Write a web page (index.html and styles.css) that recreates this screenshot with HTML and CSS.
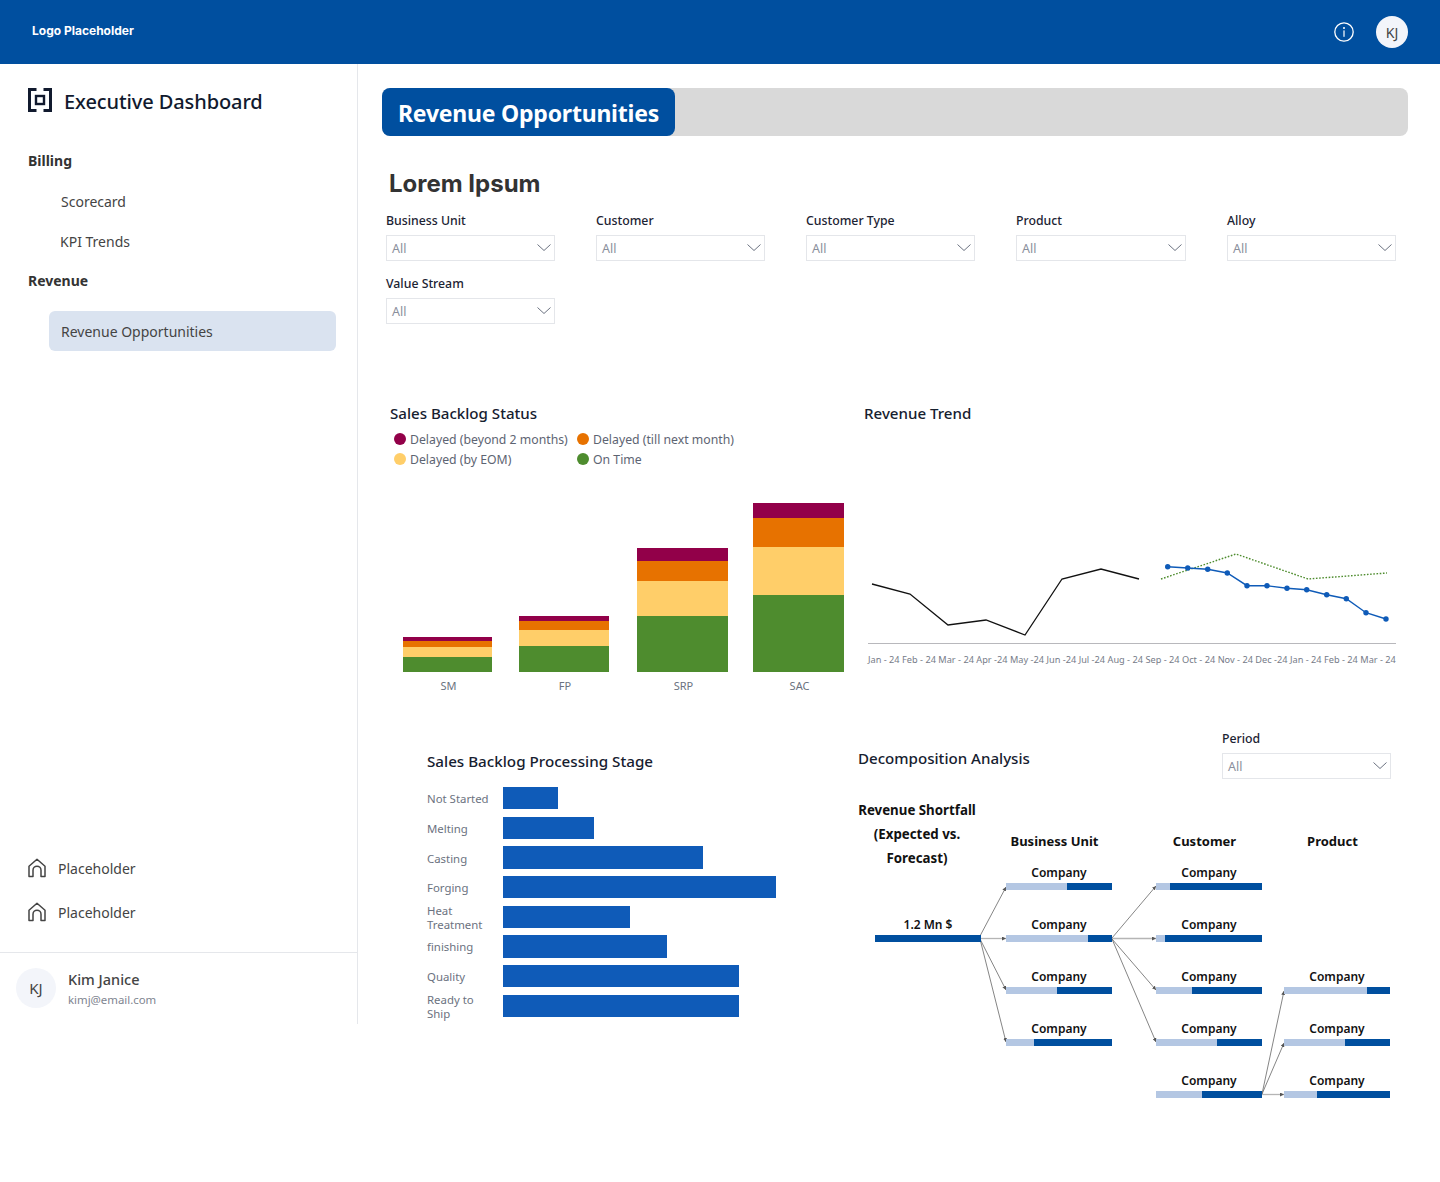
FILE: index.html
```html
<!DOCTYPE html>
<html lang="en">
<head>
<meta charset="utf-8">
<title>Executive Dashboard</title>
<link rel="stylesheet" href="styles.css">
</head>
<body>
<header class="topbar">
  <div class="logo-text">Logo Placeholder</div>
  <div class="topbar-right">
    <svg class="info-icon" viewBox="0 0 20 20" width="20" height="20"><circle cx="10" cy="10" r="9.2" fill="none" stroke="#fff" stroke-width="1.3"/><circle cx="10" cy="6" r="1" fill="#fff"/><rect x="9.4" y="8.4" width="1.2" height="6.4" fill="#fff"/></svg>
    <div class="avatar avatar-small">KJ</div>
  </div>
</header>
<div class="layout">
  <aside class="sidebar">
    <div class="brand">
      <svg viewBox="0 0 24 24" width="24" height="24"><path d="M8.5 1.5H1.5V22.5H8.5M15.5 1.5H22.5V22.5H15.5" fill="none" stroke="#111a2e" stroke-width="3"/><rect x="8" y="8" width="8" height="8" fill="none" stroke="#111a2e" stroke-width="2.4"/></svg>
      <span>Executive Dashboard</span>
    </div>
    <nav class="nav">
      <div class="nav-group nav-billing">Billing</div>
      <a class="nav-item nav-score">Scorecard</a>
      <a class="nav-item nav-kpi">KPI Trends</a>
      <div class="nav-group nav-revenue">Revenue</div>
      <a class="nav-item nav-active">Revenue Opportunities</a>
    </nav>
    <div class="side-links">
      <a class="side-link"><svg viewBox="0 0 18 20" width="18" height="20"><path d="M1 18.6V8.2L9 1.2L17 8.2V18.6H13V12.2A4 4 0 0 0 5 12.2V18.6Z" fill="none" stroke="#444" stroke-width="1.5" stroke-linejoin="round"/></svg>Placeholder</a>
      <a class="side-link"><svg viewBox="0 0 18 20" width="18" height="20"><path d="M1 18.6V8.2L9 1.2L17 8.2V18.6H13V12.2A4 4 0 0 0 5 12.2V18.6Z" fill="none" stroke="#444" stroke-width="1.5" stroke-linejoin="round"/></svg>Placeholder</a>
    </div>
    <div class="user">
      <div class="avatar avatar-large">KJ</div>
      <div class="user-info">
        <div class="user-name">Kim Janice</div>
        <div class="user-mail">kimj@email.com</div>
      </div>
    </div>
  </aside>
  <main class="main">
    <div class="banner"><h1>Revenue Opportunities</h1></div>
    <h2 class="subtitle">Lorem Ipsum</h2>
    <div class="filters">
      <div class="filter"><label>Business Unit</label><div class="select">All<svg viewBox="0 0 14 7" width="14" height="7"><path d="M0.5 0.5L7 6.5L13.5 0.5" fill="none" stroke="#6b7280"/></svg></div></div>
      <div class="filter"><label>Customer</label><div class="select">All<svg viewBox="0 0 14 7" width="14" height="7"><path d="M0.5 0.5L7 6.5L13.5 0.5" fill="none" stroke="#6b7280"/></svg></div></div>
      <div class="filter"><label>Customer Type</label><div class="select">All<svg viewBox="0 0 14 7" width="14" height="7"><path d="M0.5 0.5L7 6.5L13.5 0.5" fill="none" stroke="#6b7280"/></svg></div></div>
      <div class="filter"><label>Product</label><div class="select">All<svg viewBox="0 0 14 7" width="14" height="7"><path d="M0.5 0.5L7 6.5L13.5 0.5" fill="none" stroke="#6b7280"/></svg></div></div>
      <div class="filter"><label>Alloy</label><div class="select">All<svg viewBox="0 0 14 7" width="14" height="7"><path d="M0.5 0.5L7 6.5L13.5 0.5" fill="none" stroke="#6b7280"/></svg></div></div>
      <div class="filter"><label>Value Stream</label><div class="select">All<svg viewBox="0 0 14 7" width="14" height="7"><path d="M0.5 0.5L7 6.5L13.5 0.5" fill="none" stroke="#6b7280"/></svg></div></div>
    </div>

    <div class="row-top">
      <section class="backlog">
        <h3>Sales Backlog Status</h3>
        <div class="legend">
          <span class="legend-item"><i class="dot maroon"></i>Delayed (beyond 2 months)</span>
          <span class="legend-item"><i class="dot orange"></i>Delayed (till next month)</span>
          <span class="legend-item"><i class="dot yellow"></i>Delayed (by EOM)</span>
          <span class="legend-item"><i class="dot green"></i>On Time</span>
        </div>
        <div class="stack-chart">
          <div class="stack stack-sm">
            <div class="seg maroon" style="height:4px"></div><div class="seg orange" style="height:6px"></div><div class="seg yellow" style="height:10px"></div><div class="seg green" style="height:15px"></div>
            <span class="stack-label">SM</span>
          </div>
          <div class="stack stack-fp">
            <div class="seg maroon" style="height:5px"></div><div class="seg orange" style="height:9px"></div><div class="seg yellow" style="height:16px"></div><div class="seg green" style="height:26px"></div>
            <span class="stack-label">FP</span>
          </div>
          <div class="stack stack-srp">
            <div class="seg maroon" style="height:13px"></div><div class="seg orange" style="height:20px"></div><div class="seg yellow" style="height:35px"></div><div class="seg green" style="height:56px"></div>
            <span class="stack-label">SRP</span>
          </div>
          <div class="stack stack-sac">
            <div class="seg maroon" style="height:15px"></div><div class="seg orange" style="height:29px"></div><div class="seg yellow" style="height:48px"></div><div class="seg green" style="height:77px"></div>
            <span class="stack-label">SAC</span>
          </div>
        </div>
      </section>
      <section class="trend">
        <h3>Revenue Trend</h3>
        <svg class="trend-svg" viewBox="864 540 536 104" width="536" height="104">
          <polyline points="872,584 910,594 948,625 986,620 1025,635 1062,579 1101,569 1139,579" fill="none" stroke="#111" stroke-width="1.3"/>
          <polyline points="1161,579 1236,554 1308,579 1387,573" fill="none" stroke="#4e8c2e" stroke-width="1.4" stroke-dasharray="1.6 1.6"/>
          <polyline points="1167.7,566.7 1187.7,568 1207.7,569.3 1227.3,573 1247,585.7 1267,585.7 1287,588.3 1306.7,589.7 1326.7,594.7 1346.3,598.7 1366,612.7 1386,619" fill="none" stroke="#0f5bb8" stroke-width="1.4"/>
          <g fill="#0f5bb8">
            <circle cx="1167.7" cy="566.7" r="2.7"/><circle cx="1187.7" cy="568" r="2.7"/><circle cx="1207.7" cy="569.3" r="2.7"/><circle cx="1227.3" cy="573" r="2.7"/><circle cx="1247" cy="585.7" r="2.7"/><circle cx="1267" cy="585.7" r="2.7"/><circle cx="1287" cy="588.3" r="2.7"/><circle cx="1306.7" cy="589.7" r="2.7"/><circle cx="1326.7" cy="594.7" r="2.7"/><circle cx="1346.3" cy="598.7" r="2.7"/><circle cx="1366" cy="612.7" r="2.7"/><circle cx="1386" cy="619" r="2.7"/>
          </g>
          <line x1="868" y1="643.5" x2="1396" y2="643.5" stroke="#b8b8bc" stroke-width="1"/>
        </svg>
        <div class="trend-axis">
          <span>Jan - 24</span><span>Feb - 24</span><span>Mar - 24</span><span>Apr -24</span><span>May -24</span><span>Jun -24</span><span>Jul -24</span><span>Aug - 24</span><span>Sep - 24</span><span>Oct - 24</span><span>Nov - 24</span><span>Dec -24</span><span>Jan - 24</span><span>Feb - 24</span><span>Mar - 24</span>
        </div>
      </section>
    </div>

    <div class="row-bottom">
      <section class="stage">
        <h3>Sales Backlog Processing Stage</h3>
        <div class="hbars">
          <span class="hbar-label">Not Started</span><div class="hbar" style="width:54.5px"></div>
          <span class="hbar-label">Melting</span><div class="hbar" style="width:91px"></div>
          <span class="hbar-label">Casting</span><div class="hbar" style="width:200px"></div>
          <span class="hbar-label">Forging</span><div class="hbar" style="width:272.5px"></div>
          <span class="hbar-label">Heat<br>Treatment</span><div class="hbar" style="width:127px"></div>
          <span class="hbar-label">finishing</span><div class="hbar" style="width:163.5px"></div>
          <span class="hbar-label">Quality</span><div class="hbar" style="width:236px"></div>
          <span class="hbar-label">Ready to<br>Ship</span><div class="hbar" style="width:236px"></div>
        </div>
      </section>
      <section class="decomp">
        <div class="decomp-head">
          <h3>Decomposition Analysis</h3>
          <div class="filter"><label>Period</label><div class="select">All<svg viewBox="0 0 14 7" width="14" height="7"><path d="M0.5 0.5L7 6.5L13.5 0.5" fill="none" stroke="#6b7280"/></svg></div></div>
        </div>
        <div class="tree">
          <svg class="tree-lines" viewBox="858 798 540 310" width="540" height="310">
            <defs>
              <marker id="arrow" viewBox="0 0 4 4" refX="4" refY="2" markerWidth="4" markerHeight="4" markerUnits="userSpaceOnUse" orient="auto"><path d="M0 0L4 2L0 4Z" fill="#555"/></marker>
            </defs>
            <g fill="none" stroke="#b5b5b5" stroke-width="1.3">
              <line x1="981" y1="938.5" x2="1006" y2="938.5" marker-end="url(#arrow)"/>
              <line x1="1112" y1="938.5" x2="1156" y2="938.5" marker-end="url(#arrow)"/>
              <line x1="1262" y1="1094.5" x2="1284" y2="1094.5" marker-end="url(#arrow)"/>
            </g>
            <g fill="none" stroke="#666" stroke-width="0.8">
              <line x1="980" y1="936" x2="1006" y2="887" marker-end="url(#arrow)"/>
              <line x1="980" y1="939" x2="1006" y2="990" marker-end="url(#arrow)"/>
              <line x1="980" y1="939" x2="1006" y2="1042" marker-end="url(#arrow)"/>
              <line x1="1112" y1="938" x2="1156" y2="886" marker-end="url(#arrow)"/>
              <line x1="1112" y1="939" x2="1156" y2="990" marker-end="url(#arrow)"/>
              <line x1="1112" y1="939" x2="1156" y2="1042" marker-end="url(#arrow)"/>
              <line x1="1262" y1="1094" x2="1284" y2="991" marker-end="url(#arrow)"/>
              <line x1="1262" y1="1094" x2="1284" y2="1043" marker-end="url(#arrow)"/>
            </g>
          </svg>
          <div class="tree-grid">
            <div class="tree-head col1 head-root">Revenue Shortfall<br>(Expected vs.<br>Forecast)</div>
            <div class="tree-head col2">Business Unit</div>
            <div class="tree-head col3">Customer</div>
            <div class="tree-head col4">Product</div>

            <div class="node col1 r2"><span>1.2 Mn $</span><div class="bar"></div></div>

            <div class="node col2 r1"><span>Company</span><div class="bar"><i style="width:61px"></i></div></div>
            <div class="node col2 r2"><span>Company</span><div class="bar"><i style="width:82px"></i></div></div>
            <div class="node col2 r3"><span>Company</span><div class="bar"><i style="width:51px"></i></div></div>
            <div class="node col2 r4"><span>Company</span><div class="bar"><i style="width:28px"></i></div></div>

            <div class="node col3 r1"><span>Company</span><div class="bar"><i style="width:14px"></i></div></div>
            <div class="node col3 r2"><span>Company</span><div class="bar"><i style="width:9px"></i></div></div>
            <div class="node col3 r3"><span>Company</span><div class="bar"><i style="width:36px"></i></div></div>
            <div class="node col3 r4"><span>Company</span><div class="bar"><i style="width:61px"></i></div></div>
            <div class="node col3 r5"><span>Company</span><div class="bar"><i style="width:46px"></i></div></div>

            <div class="node col4 r3"><span>Company</span><div class="bar"><i style="width:83px"></i></div></div>
            <div class="node col4 r4"><span>Company</span><div class="bar"><i style="width:61px"></i></div></div>
            <div class="node col4 r5"><span>Company</span><div class="bar"><i style="width:33px"></i></div></div>
          </div>
        </div>
      </section>
    </div>
  </main>
</div>
</body>
</html>
```

FILE: styles.css
```css
* { box-sizing: border-box; }
html, body { margin: 0; padding: 0; }
body {
  width: 1440px;
  height: 1182px;
  overflow: hidden;
  background: #fff;
  font-family: "Noto Sans", "Open Sans", sans-serif;
  color: #111a2e;
}
h1, h2, h3 { margin: 0; }

.topbar {
  height: 64px;
  background: #004f9f;
  display: flex;
  align-items: center;
  justify-content: space-between;
  padding: 0 32px;
}
.logo-text { font-family: Inter, sans-serif; font-weight: 700; font-size: 12px; color: #fff; margin-top: -4px; }
.topbar-right { display: flex; align-items: center; gap: 22px; }
.info-icon { display: block; }
.avatar {
  border-radius: 50%;
  background: #f3f5fa;
  color: #444;
  display: flex;
  align-items: center;
  justify-content: center;
}
.avatar-small { width: 32px; height: 32px; font-size: 14px; }
.avatar-large { width: 40px; height: 40px; font-size: 15px; }

.layout { display: flex; align-items: flex-start; }

.sidebar {
  width: 358px;
  height: 960px;
  border-right: 1px solid #e5e7eb;
  display: flex;
  flex-direction: column;
  flex: none;
}
.brand {
  display: flex;
  align-items: center;
  gap: 12px;
  margin: 24px 0 0 28px;
  height: 24px;
  font-size: 20px;
  font-weight: 500;
  letter-spacing: -0.1px;
}
.brand span { padding-top: 2px; }
.brand svg { display: block; flex: none; }
.nav { display: flex; flex-direction: column; padding-left: 28px; padding-right: 21px; }
.nav-group { font-size: 14px; font-weight: 700; color: #333; line-height: 20px; }
.nav-billing { margin-top: 39px; }
.nav-revenue { margin-top: 19px; }
.nav-item { font-size: 14px; color: #444; line-height: 20px; display: block; }
.nav-score { margin: 21px 0 0 33px; }
.nav-kpi { margin: 20px 0 0 32px; }
.nav-active {
  margin: 20px 0 0 21px;
  height: 40px;
  line-height: 42px;
  padding-left: 12px;
  background: #dae3f0;
  border-radius: 6px;
}
.side-links { margin-top: auto; padding-left: 28px; display: flex; flex-direction: column; gap: 24px; padding-bottom: 30px; }
.side-link { display: flex; align-items: center; gap: 12px; font-size: 14px; color: #444; height: 20px; }
.side-link svg { display: block; flex: none; }
.user {
  height: 72px;
  border-top: 1px solid #e5e7eb;
  display: flex;
  align-items: flex-start;
  gap: 12px;
  padding: 15px 0 0 16px;
}
.user-name { font-size: 14.5px; font-weight: 500; color: #444; line-height: 20px; margin-top: 1px; }
.user-mail { font-size: 11.4px; color: #808590; line-height: 20px; margin-top: 1px; }

.main { flex: 1; padding: 24px 32px 0 24px; min-width: 0; }
.banner { height: 48px; background: #d9d9d9; border-radius: 8px; }
.banner h1 {
  width: 293px;
  height: 48px;
  background: #004f9f;
  border-radius: 8px;
  color: #fff;
  font-size: 23px;
  font-weight: 700;
  letter-spacing: -0.22px;
  line-height: 50px;
  padding-left: 16px;
  white-space: nowrap;
}
.subtitle {
  font-family: Inter, sans-serif;
  font-size: 24px;
  font-weight: 700;
  color: #333;
  line-height: 30px;
  margin: 33px 0 0 7px;
}
.filters {
  display: grid;
  grid-template-columns: 169px 169px 169px 170px 169px;
  column-gap: 41px;
  row-gap: 12px;
  margin: 11px 0 0 4px;
}
.filter label { display: block; font-size: 12.3px; font-weight: 500; color: #1c2333; line-height: 22px; height: 25px; }
.filter .select {
  height: 26px;
  border: 1px solid #e4e6ea;
  display: flex;
  align-items: center;
  justify-content: space-between;
  padding: 1px 3px 0 5px;
  font-size: 12.5px;
  color: #8a8f9c;
}
.select svg { display: block; flex: none; margin-top: -2px; }

.row-top { display: flex; margin-top: 79px; height: 325px; }
h3 { font-size: 15.1px; font-weight: 500; color: #16202f; line-height: 22px; white-space: nowrap; position: relative; top: -1px; }
.backlog { width: 482px; padding-left: 8px; flex: none; }
.legend {
  display: grid;
  grid-template-columns: 183px 1fr;
  grid-auto-rows: 20px;
  margin: 4px 0 0 4px;
}
.legend-item { display: flex; align-items: center; font-size: 12.25px; color: #5d6472; white-space: nowrap; }
.dot { width: 12px; height: 12px; border-radius: 50%; margin-right: 4px; flex: none; }
.maroon { background: #920049; }
.orange { background: #e77200; }
.yellow { background: #ffce69; }
.green { background: #4e8c2e; }

.stack-chart { display: flex; align-items: flex-end; height: 200px; margin: 3px 0 0 0; position: relative; }
.stack { display: flex; flex-direction: column; position: relative; flex: none; }
.seg { width: 100%; }
.stack-sm { width: 89px; margin-left: 13px; }
.stack-fp { width: 90px; margin-left: 27px; }
.stack-srp { width: 91px; margin-left: 28px; }
.stack-sac { width: 91px; margin-left: 25px; }
.stack-label {
  position: absolute;
  left: 2px; right: 0;
  bottom: -22px;
  text-align: center;
  font-size: 11px;
  line-height: 16px;
  color: #6b7280;
}

.trend { flex: 1; min-width: 0; }
.trend-svg { display: block; margin-top: 115px; }
.trend-axis {
  display: flex;
  justify-content: space-between;
  width: 528px;
  margin: 10px 0 0 4px;
  font-size: 9.2px;
  line-height: 12px;
  color: #767b88;
  white-space: nowrap;
}

.row-bottom { display: flex; }
.stage { width: 476px; padding-left: 45px; flex: none; padding-top: 23px; }
.stage h3 { font-size: 15.2px; }
.hbars {
  display: grid;
  grid-template-columns: 76px 1fr;
  grid-auto-rows: 22.4px;
  row-gap: 7.27px;
  margin-top: 14px;
  align-items: center;
}
.hbar-label { font-size: 11.4px; line-height: 14px; color: #6b7280; white-space: nowrap; position: relative; top: 1px; }
.hbar { height: 22.4px; background: #0f5bb8; }

.decomp { flex: 1; min-width: 0; position: relative; }
.decomp-head { display: flex; justify-content: space-between; padding-right: 17px; height: 50px; }
.decomp-head h3 { margin-top: 20px; }
.decomp-head .filter { width: 169px; }
.tree { position: relative; width: 540px; height: 310px; margin-top: 20px; }
.tree-lines { position: absolute; left: 0; top: 0; pointer-events: none; }
.tree-grid {
  display: grid;
  grid-template-columns: 106px 25px 106px 44px 106px 22px 106px;
  grid-template-rows: 65px repeat(5, 52px);
  padding-left: 17px;
  position: relative;
}
.col1 { grid-column: 1; }
.col2 { grid-column: 3; }
.col3 { grid-column: 5; }
.col4 { grid-column: 7; }
.r1 { grid-row: 2; }
.r2 { grid-row: 3; }
.r3 { grid-row: 4; }
.r4 { grid-row: 5; }
.r5 { grid-row: 6; }
.tree-head {
  grid-row: 1;
  font-size: 13px;
  font-weight: 700;
  line-height: 24px;
  color: #111;
  text-align: center;
  white-space: nowrap;
  align-self: end;
  padding: 0 9px 10px 0;
}
.head-root { margin-left: -23px; width: 130px; padding: 0; align-self: start; font-size: 13.3px; }
.node { display: flex; flex-direction: column; align-items: center; height: 27px; }
.node span { font-size: 12px; font-weight: 600; line-height: 20px; height: 18px; color: #111; margin-bottom: 2px; }
.bar { width: 100%; height: 7px; background: #004f9f; display: flex; flex: none; }
.bar i { display: block; height: 7px; background: #b4c7e3; }
```
